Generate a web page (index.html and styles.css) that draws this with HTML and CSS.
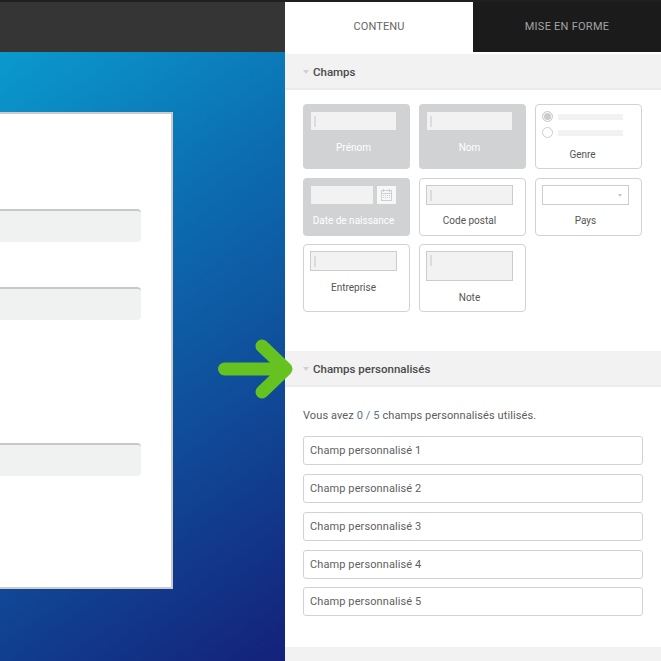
FILE: index.html
```html
<!DOCTYPE html>
<html lang="fr">
<head>
<meta charset="utf-8">
<title>Champs</title>
<link rel="stylesheet" href="styles.css">
</head>
<body>
<div class="app">
  <div class="stage">
    <div class="topbar"></div>
    <div class="canvas">
      <div class="sheet">
        <div class="line line-a"></div>
        <div class="line line-b"></div>
        <div class="line line-c"></div>
      </div>
    </div>
  </div>
  <aside class="panel">
    <div class="tabs">
      <div class="tab tab-on">CONTENU</div>
      <div class="tab tab-off">MISE EN FORME</div>
    </div>
    <div class="head"><span class="caret"></span>Champs</div>
    <div class="fields">
      <div class="row row-first">
        <div class="card on"><div class="body"><div class="box"><i class="tick"></i></div><div class="label">Prénom</div></div></div>
        <div class="card on"><div class="body"><div class="box"><i class="tick"></i></div><div class="label">Nom</div></div></div>
        <div class="card">
          <div class="body narrow">
            <div class="opt"><span class="radio checked"></span><span class="bar"></span></div>
            <div class="opt"><span class="radio"></span><span class="bar"></span></div>
            <div class="label">Genre</div>
          </div>
        </div>
      </div>
      <div class="row row-second">
        <div class="card on">
          <div class="body">
            <div class="dateline">
              <div class="box box-date"></div>
              <div class="cal">
                <svg width="11" height="12" viewBox="0 0 11 12" fill="none" stroke="#d0d0d0"><rect x="0.5" y="1.5" width="10" height="10"/><path d="M2.500 0v3M8.500 0v3M0 4.500h11"/><path d="M2 6.500h7M2 8.500h7" stroke-dasharray="1 1"/></svg>
              </div>
            </div>
            <div class="label">Date de naissance</div>
          </div>
        </div>
        <div class="card"><div class="body"><div class="input"><i class="tick"></i></div><div class="label">Code postal</div></div></div>
        <div class="card"><div class="body"><div class="input select"><span class="drop"></span></div><div class="label">Pays</div></div></div>
      </div>
      <div class="row">
        <div class="card tall"><div class="body"><div class="input"><i class="tick"></i></div><div class="label wide">Entreprise</div></div></div>
        <div class="card tall"><div class="body"><div class="input area"><i class="tick"></i></div><div class="label wide">Note</div></div></div>
      </div>
    </div>
    <div class="head"><span class="caret"></span>Champs personnalisés</div>
    <div class="custom">
      <p class="intro">Vous avez <span class="count">0 / 5</span> champs personnalisés utilisés.</p>
      <div class="item">Champ personnalisé 1</div>
      <div class="item">Champ personnalisé 2</div>
      <div class="item">Champ personnalisé 3</div>
      <div class="item">Champ personnalisé 4</div>
      <div class="item">Champ personnalisé 5</div>
    </div>
    <div class="foot"></div>
  </aside>
</div>
<svg class="arrow" width="80" height="62" viewBox="0 0 80 62" fill="none" stroke="#66c221" stroke-width="13" stroke-linecap="round" stroke-linejoin="round">
  <path d="M6.500 31H66"/>
  <path d="M44 8L68 31L44 54"/>
</svg>
</body>
</html>
```
FILE: styles.css
```css
* { box-sizing: border-box; }
html, body { margin: 0; padding: 0; height: 661px; overflow: hidden; background: #fff; }
body { font-family: Roboto, "Liberation Sans", sans-serif; font-size: 11px; color: #555; position: relative; }

.app { display: flex; height: 661px; }

.stage { width: 285px; flex: none; display: flex; flex-direction: column; }
.topbar { height: 52px; background: #353535; border-top: 2px solid #1f1f1f; }
.canvas { flex: 1; padding-top: 60px; background: linear-gradient(145deg, #0a9acd 0%, #0c6cb0 35%, #104a98 65%, #14217a 100%); }
.sheet { width: 173px; height: 477px; background: #fff; border: 2px solid #ccc; border-left: 0; padding-top: 95px; }
.line { width: 141px; height: 33px; background: #f0f1f1; border-top: 2px solid #c8c8c8; border-radius: 0 4px 4px 0; }
.line-b { margin-top: 45px; }
.line-c { margin-top: 123px; }

.panel { flex: 1; min-width: 0; display: flex; flex-direction: column; border-top: 2px solid #1f1f1f; }
.tabs { display: flex; height: 52px; align-items: flex-start; }
.tab { width: 188px; text-align: center; }
.tab-on { height: 52px; line-height: 49px; background: #fff; color: #666; letter-spacing: 0.1px; }
.tab-off { height: 50px; line-height: 49px; background: #1b1b1b; color: #a3a3a3; letter-spacing: 0.25px; }

.head { height: 36px; padding: 2px 0 0 18px; background: #f2f2f2; border-bottom: 2px solid #ebebeb; font-weight: 500; font-size: 11.500px; color: #4a4a4a; display: flex; align-items: center; flex: none; }
.caret { width: 0; height: 0; margin-right: 4px; border-left: 3px solid transparent; border-right: 3px solid transparent; border-top: 4px solid #d0d0d0; }

.fields { padding: 14px 0 39px 18px; flex: none; }
.row { display: flex; gap: 9px; margin-bottom: 8px; }
.row:last-child { margin-bottom: 0; }
.row-first { margin-bottom: 9px; }
.row-second .card { height: 58px; }

.card { width: 107px; padding: 6px; border: 1px solid #d1d2d3; border-radius: 4px; background: #fff; }
.row-first .card { height: 65px; }
.card.tall { height: 68px; }
.card.on { background: #d1d2d3; padding: 8px; color: #fff; border: 0; }
.body { width: 87px; }
.on .body { width: 85px; }
.body.narrow { width: 81px; }

.label { margin-top: 9px; font-size: 10px; line-height: 14px; text-align: center; white-space: nowrap; }
.label.wide { margin-top: 10px; }
.on .label { margin-top: 11px; }
.narrow .label { margin-top: 10px; }

.box { height: 18px; background: #f2f2f2; padding: 4px 3px; }
.tick { display: block; width: 2px; height: 11px; background: #dcdcdc; }
.dateline { display: flex; gap: 4px; }
.dateline + .label { margin-top: 10px; }
.box-date { width: 62px; }
.cal { width: 19px; height: 18px; background: #f7f7f7; display: flex; align-items: center; justify-content: center; }

.input { height: 20px; background: #f2f2f2; border: 1px solid #ccc; padding: 4px 3px; }
.input.area { height: 30px; padding-top: 3px; }
.input.select { background: #fff; display: flex; justify-content: flex-end; align-items: center; padding: 0 6px 0 0; }
.drop { width: 0; height: 0; border-left: 2.500px solid transparent; border-right: 2.500px solid transparent; border-top: 3px solid #c4c4c4; }

.opt { display: flex; align-items: center; gap: 5px; height: 11px; margin-bottom: 5px; }
.opt + .opt { margin-bottom: 0; }
.radio { width: 11px; height: 11px; border: 1px solid #ccc; border-radius: 50%; background: #fff; flex: none; }
.radio.checked { background: #ccc; box-shadow: inset 0 0 0 1px #fff; }
.bar { flex: 1; height: 6px; background: #f2f2f2; }

.custom { padding: 0 18px 31px 18px; flex: none; }
.intro { margin: 0; padding-top: 22px; height: 49px; line-height: 14px; letter-spacing: 0.1px; color: #5c5c5c; }
.count { color: #5a6f8a; }
.item { width: 340px; height: 29px; line-height: 27px; padding-left: 6px; margin-bottom: 9px; border: 1px solid #d1d2d3; border-radius: 3px; letter-spacing: 0.1px; color: #5f5f5f; }
.item:nth-child(5) { margin-bottom: 8px; }
.item:last-child { margin-bottom: 0; }

.foot { flex: 1; background: #f2f2f2; }

.arrow { position: absolute; left: 218px; top: 338px; }
```
